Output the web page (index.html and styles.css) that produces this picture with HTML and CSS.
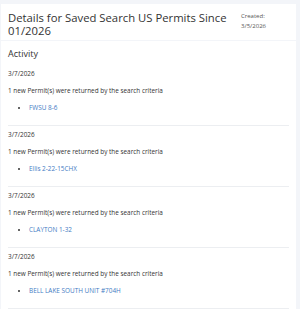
FILE: index.html
```
<!DOCTYPE html>
<html lang="en">
<head>
    <meta charset="UTF-8">
    <meta name="viewport" content="width=device-width, initial-scale=1.0">
    <title>Saved Search Details</title>
    <link rel="stylesheet" href="styles.css">
</head>
<body>
    <div class="header">
        <h1>Details for Saved Search US Permits Since 01/2026</h1>
        <div class="created">
            <div>Created:</div>
            <div>3/5/2026</div>
        </div>
    </div>
    <div class="activity">
        <h2>Activity</h2>
        <div class="item">
            <div class="date">3/7/2026</div>
            <p>1 new Permit(s) were returned by the search criteria</p>
            <ul>
                <li><a href="#">FWSU 8-6</a></li>
            </ul>
        </div>
        <div class="item">
            <div class="date">3/7/2026</div>
            <p>1 new Permit(s) were returned by the search criteria</p>
            <ul>
                <li><a href="#">Ellis 2-22-15CHX</a></li>
            </ul>
        </div>
        <div class="item">
            <div class="date">3/7/2026</div>
            <p>1 new Permit(s) were returned by the search criteria</p>
            <ul>
                <li><a href="#">CLAYTON 1-32</a></li>
            </ul>
        </div>
        <div class="item">
            <div class="date">3/7/2026</div>
            <p>1 new Permit(s) were returned by the search criteria</p>
            <ul>
                <li><a href="#">BELL LAKE SOUTH UNIT #704H</a></li>
            </ul>
        </div>
    </div>
</body>
</html>
```

FILE: styles.css
```
body {
    font-family: "Open Sans", sans-serif;
    background-color: #f3f5f9;
    color: #333;
    margin: 0;
    padding: 4px 4px 0 1px;
}
.header {
    background-color: white;
    display: flex;
    box-sizing: border-box;
    height: 36px;
    padding: 7px 30px 0 7px;
}
h1 {
    flex: 1;
    font-size: 11.3px;
    font-weight: normal;
    line-height: 13px;
    margin: 0 8px 0 0;
}
.created {
    flex: none;
    font-size: 6px;
    line-height: 10px;
    color: #555;
}
.activity {
    background-color: white;
    margin-top: 1px;
    padding: 6px 7px 0 7px;
}
h2 {
    font-size: 9px;
    font-weight: normal;
    margin: 0 0 9px 0;
}
.item {
    border-bottom: 1px solid #eceef1;
    font-size: 6.4px;
    padding-bottom: 12px;
    margin-bottom: 4px;
}
.date {
    line-height: 10px;
}
p {
    margin: 7px 0 0 0;
    line-height: 10px;
}
ul {
    margin: 7px 0 0 0;
    padding-left: 21px;
    line-height: 10px;
}
a {
    color: #3f7bc4;
    text-decoration: none;
}
```
